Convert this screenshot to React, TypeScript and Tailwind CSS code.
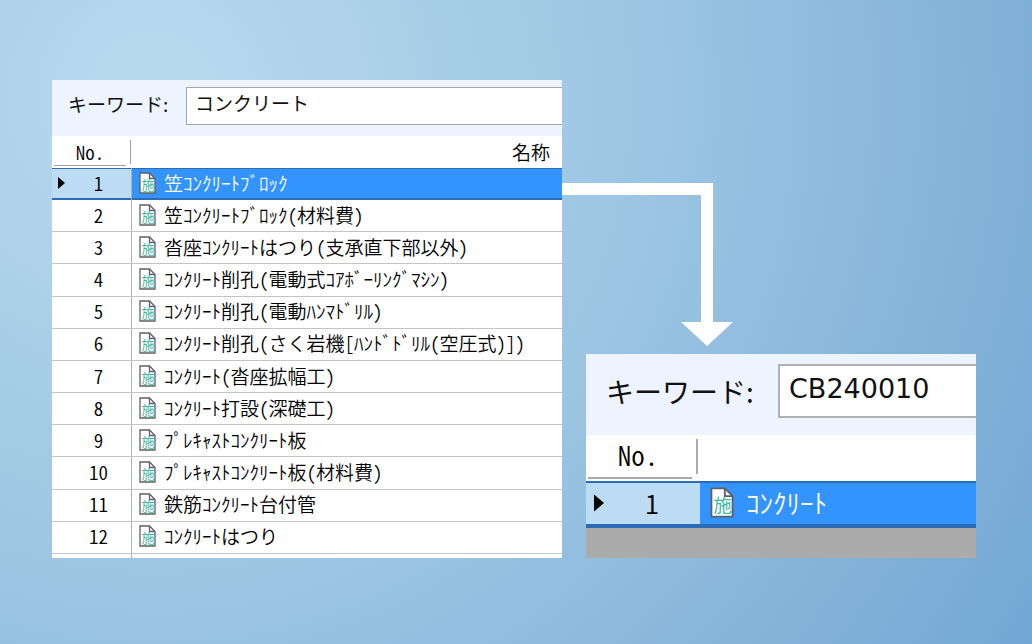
import clsx from 'clsx';

interface Item {
  no: number;
  name: string;
}

const items: Item[] = [
  { no: 1, name: '笠ｺﾝｸﾘｰﾄﾌﾞﾛｯｸ' },
  { no: 2, name: '笠ｺﾝｸﾘｰﾄﾌﾞﾛｯｸ(材料費)' },
  { no: 3, name: '沓座ｺﾝｸﾘｰﾄはつり(支承直下部以外)' },
  { no: 4, name: 'ｺﾝｸﾘｰﾄ削孔(電動式ｺｱﾎﾞｰﾘﾝｸﾞﾏｼﾝ)' },
  { no: 5, name: 'ｺﾝｸﾘｰﾄ削孔(電動ﾊﾝﾏﾄﾞﾘﾙ)' },
  { no: 6, name: 'ｺﾝｸﾘｰﾄ削孔(さく岩機[ﾊﾝﾄﾞﾄﾞﾘﾙ(空圧式)])' },
  { no: 7, name: 'ｺﾝｸﾘｰﾄ(沓座拡幅工)' },
  { no: 8, name: 'ｺﾝｸﾘｰﾄ打設(深礎工)' },
  { no: 9, name: 'ﾌﾟﾚｷｬｽﾄｺﾝｸﾘｰﾄ板' },
  { no: 10, name: 'ﾌﾟﾚｷｬｽﾄｺﾝｸﾘｰﾄ板(材料費)' },
  { no: 11, name: '鉄筋ｺﾝｸﾘｰﾄ台付管' },
  { no: 12, name: 'ｺﾝｸﾘｰﾄはつり' },
];

function DocIcon({ className }: { className: string }) {
  return (
    <svg viewBox="0 0 17 22" className={className} aria-hidden="true">
      <path d="M1 1h9.500l5.500 5.500V21H1z" fill="#fff" stroke="#5c6166" strokeWidth="1.300" />
      <path d="M10.500 1v5.500H16" fill="none" stroke="#5c6166" strokeWidth="1.300" />
      <text x="9" y="18" textAnchor="middle" fontSize="13" fontWeight="400" fill="#3fb8a2">
        施
      </text>
    </svg>
  );
}

function RowMarker({ className }: { className: string }) {
  return (
    <svg viewBox="0 0 7 12" className={className} aria-hidden="true">
      <path d="M0 0l7 6-7 6z" fill="#000" />
    </svg>
  );
}

function ListPanel() {
  return (
    <section className="overflow-hidden bg-white">
      <div className="flex h-14 items-center bg-[#edf4ff] pl-4">
        <label htmlFor="keyword-list" className="w-[118px] shrink-0 pb-2 text-[19px]">
          キーワード:
        </label>
        <input
          id="keyword-list"
          defaultValue="コンクリート"
          className="mb-1 h-[38px] min-w-0 flex-1 border-y border-l border-[#a5a5a5] bg-white pb-2 pl-2 text-[19px] outline-none"
        />
      </div>
      <table className="h-[418px] w-full table-fixed border-separate border-spacing-0 text-[19px] leading-6 font-[350] text-black [font-feature-settings:'hwid']">
        <thead>
          <tr className="h-8">
            <th className="w-20 p-0 font-[350]">
              <div className="flex h-8 items-start pr-px">
                <span className="mr-1 ml-[2px] h-[30px] flex-1 border-b border-[#a0a0a0] pt-1">No.</span>
                <span className="mt-1 h-6 w-px bg-[#a0a0a0]" />
              </div>
            </th>
            <th className="py-0 pr-3 text-right font-[350]">名称</th>
          </tr>
        </thead>
        <tbody>
          {items.map((item) => {
            const selected = item.no === 1;
            const line = selected
              ? 'shadow-[inset_0_1px_#2b6cb5,inset_0_-2px_#2b6cb5]'
              : 'border-b border-b-[#c4c4c4]';
            return (
              <tr key={item.no} className={clsx('h-8', selected && 'bg-[#3394ff] text-white')}>
                <td
                  className={clsx(
                    'border-r border-r-[#b0b0b0] px-0 pt-0 pb-[2px]',
                    line,
                    selected && 'bg-[#bbdcf3] text-black',
                  )}
                >
                  <div className="flex items-center pl-[6px]">
                    <span className="w-2">{selected && <RowMarker className="h-3 w-[7px]" />}</span>
                    <span className="flex-1 text-center">{item.no}</span>
                  </div>
                </td>
                <td className={clsx('px-0 pt-0 pb-[2px]', line)}>
                  <div className="flex items-center pl-[7px] whitespace-nowrap">
                    <DocIcon className="mr-2 h-[22px] w-[17px] shrink-0" />
                    {item.name}
                  </div>
                </td>
              </tr>
            );
          })}
        </tbody>
      </table>
      <div className="flex h-1">
        <span className="w-20 border-r border-[#b0b0b0]" />
      </div>
    </section>
  );
}

function ResultPanel() {
  return (
    <section className="overflow-hidden bg-[#ababab]">
      <div className="flex h-[81px] items-center bg-[#edf4ff] pl-5">
        <label htmlFor="keyword-result" className="w-[172px] shrink-0 pb-2 text-[28px]">
          キーワード:
        </label>
        <input
          id="keyword-result"
          defaultValue="CB240010"
          className="mb-2 h-[54px] min-w-0 flex-1 border-y-2 border-l-2 border-[#b0b0b0] bg-white pb-1 pl-[9px] font-['DejaVu_Sans'] text-[27px] outline-none"
        />
      </div>
      <table className="w-full table-fixed border-separate border-spacing-0 bg-white text-[27px] leading-8 font-[350] text-black [font-feature-settings:'hwid']">
        <thead>
          <tr>
            <th className="w-[114px] p-0 font-[350]">
              <div className="flex h-[46px] items-start pr-[2px]">
                <span className="mr-1 ml-[2px] h-11 flex-1 border-b-2 border-[#ababab] pt-1 pr-1">No.</span>
                <span className="mt-1 h-[35px] w-[2px] bg-[#ababab]" />
              </div>
            </th>
            <th className="p-0" aria-label="名称" />
          </tr>
        </thead>
        <tbody>
          <tr className="h-[47px] bg-[#3394ff] text-white">
            <td className="bg-[#bbdcf3] px-0 pt-0 pb-1 text-black shadow-[inset_0_2px_#2b6cb5,inset_0_-4px_#2b6cb5]">
              <div className="flex items-center pl-2">
                <RowMarker className="h-[18px] w-[10px]" />
                <span className="flex-1 text-center">1</span>
              </div>
            </td>
            <td className="px-0 pt-0 pb-1 shadow-[inset_0_2px_#2b6cb5,inset_0_-4px_#2b6cb5]">
              <div className="flex items-center pl-[10px]">
                <DocIcon className="mr-3 h-[31px] w-6 shrink-0" />
                ｺﾝｸﾘｰﾄ
              </div>
            </td>
          </tr>
        </tbody>
      </table>
      <div className="h-[30px]" />
    </section>
  );
}

export default function App() {
  return (
    <main
      lang="ja"
      className="grid min-h-screen grid-cols-[minmax(0,51fr)_minmax(0,39fr)] content-start gap-6 bg-[radial-gradient(circle_at_15%_15%,#b8dbee_0%,#9bc4e2_50%,#73a7d3_100%)] pt-20 pr-14 pl-[52px] font-['Noto_Sans_CJK_JP',sans-serif] text-[#111]"
    >
      <ListPanel />
      <div className="flex flex-col justify-end gap-2">
        <svg viewBox="0 0 171 163" className="-ml-6 h-[163px] w-[171px]" aria-hidden="true">
          <path d="M0 0h151v139h20l-26 24-26-24h20V12H0z" fill="#fff" />
        </svg>
        <ResultPanel />
      </div>
    </main>
  );
}
